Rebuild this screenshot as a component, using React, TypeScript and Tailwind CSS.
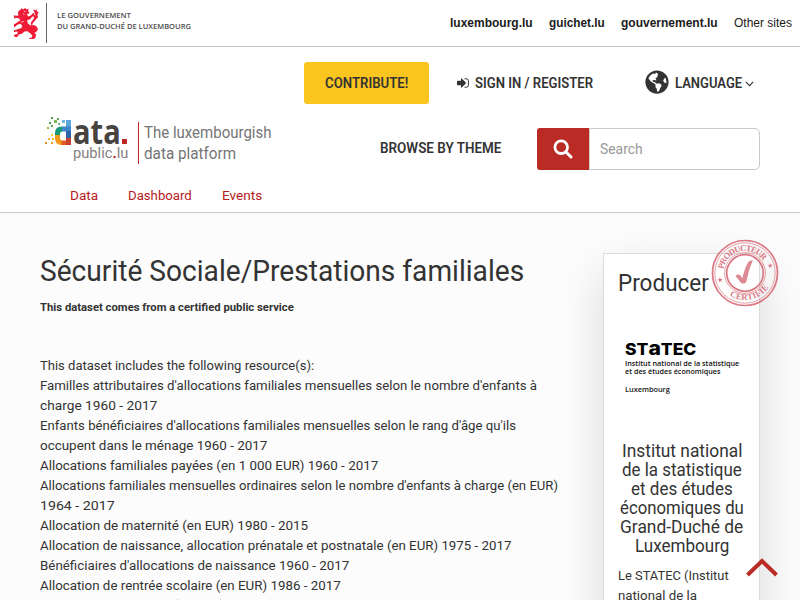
import { useLayoutEffect, useRef, useState } from "react";
import type { ReactNode } from "react";
import { FaGlobeAmericas } from "react-icons/fa";

/** One line of text, condensed or widened to occupy exactly `w` pixels. */
function Fit({ w, className = "", children }: { w: number; className?: string; children: ReactNode }) {
  const ref = useRef<HTMLSpanElement>(null);
  const [scale, setScale] = useState(1);
  useLayoutEffect(() => {
    if (ref.current) setScale(w / ref.current.offsetWidth);
  }, [w]);
  return (
    <span className={`block shrink-0 whitespace-nowrap ${className}`} style={{ width: w }}>
      <span ref={ref} className="inline-block origin-left" style={{ transform: `scaleX(${scale})` }}>
        {children}
      </span>
    </span>
  );
}

const resources: [string, number][] = [
  ["This dataset includes the following resource(s):", 274],
  ["Familles attributaires d'allocations familiales mensuelles selon le nombre d'enfants à", 497],
  ["charge 1960 - 2017", 117],
  ["Enfants bénéficiaires d'allocations familiales mensuelles selon le rang d'âge qu'ils", 476],
  ["occupent dans le ménage 1960 - 2017", 227],
  ["Allocations familiales payées (en 1 000 EUR) 1960 - 2017", 338],
  ["Allocations familiales mensuelles ordinaires selon le nombre d'enfants à charge (en EUR)", 518],
  ["1964 - 2017", 75],
  ["Allocation de maternité (en EUR) 1980 - 2015", 268],
  ["Allocation de naissance, allocation prénatale et postnatale (en EUR) 1975 - 2017", 471],
  ["Bénéficiaires d'allocations de naissance 1960 - 2017", 309],
  ["Allocation de rentrée scolaire (en EUR) 1986 - 2017", 301],
  ["Allocation d'éducation (en EUR)", 184],
];

const institute: [string, number][] = [
  ["Institut national", 120],
  ["de la statistique", 120],
  ["et des études", 102],
  ["économiques du", 124],
  ["Grand-Duché de", 123],
  ["Luxembourg", 94],
];

const dots: [number, number, number, string][] = [
  [6, 0, 2, "#3f9c46"], [12, 1, 2, "#62a94e"], [4, 5, 2, "#3f9c46"], [9, 3, 3, "#7db65a"],
  [13, 6, 2, "#61b38b"], [17, 3, 3, "#6eb4dc"], [2, 10, 2, "#8dbb3b"], [6, 8, 2, "#54a547"],
  [6, 17, 2, "#f4cf3b"], [3, 21, 2, "#f3b33b"], [7, 21, 2, "#f7b52c"],
  [0, 25, 2, "#e98a20"], [6, 25, 2, "#f39a1f"],
];

function Lion() {
  return (
    <svg viewBox="0 0 76 96" className="h-8 w-[25px]" fill="#ed1b35">
      <path d="M24 3l5 4 5-5 4 5 6-3-1 8 4 4-3 4-5 1 4 7 8-3 8-8 4 3-4 4 6 1-3 4-6-1-8 9-8 2 2 10 9 7 9-2 8 4 5 9-6 9-5 1 5 7-2 9-7 6-11-1-1-4 8-2 2-5-6-7-9-7-9 1-8 7-8 1-7 9-8-2-4-4 7-2 6-1 1-8-11 1-5-6 8 1 10-4 10-3 2-8-7-5-9 4-7 7-7-1-3-4 6-1-6-4 5-2 6 2 9-7 7-3-3-7-9-2-7 2-5-5 6-1-3-5 7 3 9-1-2-6 1-6z" />
      <path d="M60 63c-8-9-3-15 3-21s7-12 1-17c-5-5-9-5-11 0 5-2 9 2 8 7-1 7-13 12-10 23 2 6 6 8 9 8z" />
      <path d="M64 18l-5-8 2-4 3 5 4-5 2 7 5 2-4 7 2 8-4 6-4-6z" />
      <path d="M30 13h5M27 20l5 2M30 43l-9 3M45 50l8 3M34 75l-5 5" stroke="white" strokeWidth="2" />
    </svg>
  );
}

function DataLogo() {
  return (
    <div className="relative h-[46px] w-[84px]">
      <svg className="absolute left-0 top-0 h-[29px] w-[27px]" viewBox="0 0 27 29">
        {dots.map(([x, y, s, c]) => (
          <rect key={`${x}-${y}`} x={x} y={y} width={s} height={s} fill={c} />
        ))}
        <path d="M21 3h5v7h-5z" fill="#5aa6d8" />
        <path d="M17 9.500h9v5h-9z" fill="#3b86c8" />
        <path d="M21 14h5v7h-5z" fill="#2a62ab" />
        <path d="M10 18v-2q0-6.500 6.500-6.500H17v5q-2 0-2 2.500v1z" fill="#169879" />
        <path d="M10 18h5v2q0 3.500 2 3.500V28q-7 .500-7-7z" fill="#f29a1d" />
        <path d="M16.500 23.500H21V28h-4.500z" fill="#e65c27" />
        <path d="M21 21h5v7h-5z" fill="#c9402c" />
      </svg>
      <div className="absolute left-[28px] top-[-5px] flex font-[Open_Sans] text-[34.5px] font-bold leading-[38px] text-[#474340]">
        <Fit w={48}>ata</Fit>
      </div>
      <span className="absolute left-[77px] top-[22px] h-[5px] w-[5px] bg-[#bd2824]" />
      <Fit w={55} className="absolute left-[28px] top-[26px] text-[15.5px] leading-[20px] text-[#85817e]">
        public<b className="text-[#bd2824]">.</b>lu
      </Fit>
    </div>
  );
}

function Stamp() {
  return (
    <svg viewBox="0 0 68 68" className="absolute left-[107px] top-[-15px] h-[68px] w-[68px]" fill="none" stroke="#d97782">
      <circle cx="34" cy="34" r="32.5" strokeWidth="1.7" />
      <circle cx="34" cy="34" r="30.2" strokeWidth=".7" />
      <circle cx="34" cy="34" r="20.4" strokeWidth=".7" />
      <circle cx="34" cy="34" r="18.3" strokeWidth="1.7" />
      <defs>
        <path id="arcTop" d="M12.360 30.180A22 22 0 0 1 54.670 26.480" />
        <path id="arcBottom" d="M16.130 54.550A28 28 0 0 0 60.970 40.300" />
      </defs>
      <g fill="#d97782" stroke="none" className="font-[Liberation_Serif] text-[8.6px] font-bold">
        <text>
          <textPath href="#arcTop" textLength="52">PRODUCTEUR</textPath>
        </text>
        <text>
          <textPath href="#arcBottom" startOffset="3" textLength="44">CERTIFIÉ</textPath>
        </text>
        <path d="M59 24l.6 1.800 2-.2-1.400 1.300.9 1.800-1.700-1-1.400 1.500.3-2-1.800-.9 2-.4zM8.800 38.300l.8 1.800 2-.2-1.400 1.400.8 1.900-1.800-1.100-1.500 1.500.3-2-1.800-1 2-.4z" />
        <path fill="#dc8a94" d="M24.500 37q2.500-2.500 4.800-.8l2 3q2.500-10.200 5.700-15.700 1.300-2.300 4.800-2.200-4 9-6.300 20.700-.6 2.500-3.800 2.600-1.500 0-2.200-1.400z" />
      </g>
    </svg>
  );
}

export default function App() {
  return (
    <div className="h-[600px] w-[800px] overflow-hidden bg-[#fcfcfc] font-[Roboto,sans-serif] text-[#333]">
      <div className="flex h-[47px] items-start justify-between border-b border-[#c6c6c6] bg-white">
        <div className="flex items-start">
          <div className="ml-[14px] mt-[7px]"><Lion /></div>
          <div className="ml-[7px] mt-[3px] h-10 w-px bg-[#666]" />
          <div className="ml-[10px] mt-[10px] font-[Open_Sans] text-[7.6px] font-semibold leading-[11px] text-[#4c4c4e]">
            <Fit w={74}>LE GOUVERNEMENT</Fit>
            <Fit w={134}>DU GRAND-DUCHÉ DE LUXEMBOURG</Fit>
          </div>
        </div>
        <div className="mr-2 mt-[15px] flex gap-4 font-[Liberation_Sans] text-[12px] leading-4 text-[#1b1b1b]">
          <Fit w={83} className="font-bold">luxembourg.lu</Fit>
          <Fit w={56} className="font-bold">guichet.lu</Fit>
          <Fit w={97} className="font-bold">gouvernement.lu</Fit>
          <Fit w={58}>Other sites</Fit>
        </div>
      </div>

      <header className="h-[166px] border-b border-[#c8c8c8] bg-white pt-[15px]">
        <div className="flex h-[42px] items-center pl-[304px] text-[14px] font-semibold">
          <button className="flex h-[42px] w-[125px] items-center justify-center rounded-[3px] bg-[#fbc51f]">
            <Fit w={83}>CONTRIBUTE!</Fit>
          </button>
          <svg viewBox="0 0 12 10" className="ml-7 h-[10px] w-3" fill="#333">
            <path d="M0 3.400q0-.6.6-.6H4V.7q.1-.7.7-.2l4.100 4.100q.3.4 0 .8L4.700 9.500q-.6.5-.7-.2V7.200H.6Q0 7.200 0 6.600z" />
            <path d="M7.500.8h2q1.900 0 1.900 1.900v4.600q0 1.900-1.900 1.900h-2" fill="none" stroke="#333" />
          </svg>
          <Fit w={118} className="ml-[6px]">SIGN IN / REGISTER</Fit>
          <FaGlobeAmericas className="ml-[52px] mt-[-3px] h-6 w-6" />
          <Fit w={67} className="ml-[6px]">LANGUAGE</Fit>
          <svg viewBox="0 0 9 6" className="ml-[3px] mt-[2px] h-[6px] w-[9px]" fill="none" stroke="#333" strokeWidth="1.1">
            <path d="M.8 .8l3.700 3.800L8.200 .8" />
          </svg>
        </div>

        <div className="flex items-start pl-[45px]">
          <div className="mt-[13px]"><DataLogo /></div>
          <div className="ml-[9px] mt-[18px] h-[42px] w-px bg-[#bd2824]" />
          <div className="ml-[5px] mt-[19px] text-[15.6px] leading-[21px] text-[#757575]">
            <Fit w={128}>The luxembourgish</Fit>
            <Fit w={92}>data platform</Fit>
          </div>
          <Fit w={121} className="ml-[108px] mt-[34px] text-[14px] font-semibold leading-5">BROWSE BY THEME</Fit>
          <div className="ml-9 mt-6 flex h-[42px] w-[223px]">
            <div className="flex w-[52px] items-center justify-center rounded-l-[3px] bg-[#b92b24]">
              <svg viewBox="0 0 20 20" className="h-5 w-5" fill="none" stroke="white">
                <circle cx="8.2" cy="8.2" r="6.3" strokeWidth="2.8" />
                <path d="M13 13l5 5" strokeWidth="3" strokeLinecap="round" />
              </svg>
            </div>
            <div className="flex flex-1 items-center rounded-r-[5px] border border-[#c9c9c9] pl-[10px] pt-px text-[15.5px] text-[#999]">
              <Fit w={43}>Search</Fit>
            </div>
          </div>
        </div>

        <nav className="mt-[15px] flex gap-[30px] pl-[70px] text-[13.6px] leading-5 text-[#b5201c]">
          <Fit w={28}>Data</Fit>
          <Fit w={64}>Dashboard</Fit>
          <Fit w={40}>Events</Fit>
        </nav>
      </header>

      <main className="flex items-start pl-10">
        <section className="w-[563px] pt-10">
          <h1 className="text-[29px] leading-9">
            <Fit w={484}>Sécurité Sociale/Prestations familiales</Fit>
          </h1>
          <Fit w={254} className="mt-2 text-[11.5px] font-bold leading-5">This dataset comes from a certified public service</Fit>
          <div className="mt-[38px] text-[13.6px] leading-5">
            {resources.map(([text, w]) => (
              <Fit key={text} w={w}>{text}</Fit>
            ))}
          </div>
        </section>

        <aside className="relative mt-10 h-[420px] w-[157px] border border-[#dcdcdc] bg-white px-[14px] shadow-[0_20px_45px_rgba(0,0,0,0.14)]">
          <h2 className="mt-[14px] text-[23.5px] leading-[30px]">
            <Fit w={91}>Producer</Fit>
          </h2>
          <Stamp />
          <div className="ml-[7px] mt-[40px] font-[Open_Sans] text-[7px] font-semibold leading-[8px] text-[#111]">
            <Fit w={71} className="h-5 font-[Inter] text-[16.5px] font-extrabold leading-5 text-black">
              ST<span className="text-[20px] leading-none">a</span>TEC
            </Fit>
            <Fit w={114} className="mt-[2px]">Institut national de la statistique</Fit>
            <Fit w={95}>et des études économiques</Fit>
            <Fit w={45} className="mt-[10px]">Luxembourg</Fit>
          </div>
          <h3 className="mt-[48px] flex flex-col items-center text-[18.5px] leading-[19px]">
            {institute.map(([text, w]) => (
              <Fit key={text} w={w}>{text}</Fit>
            ))}
          </h3>
          <div className="mt-[9px] text-[13.6px] leading-5">
            <Fit w={111}>Le STATEC (Institut</Fit>
            <Fit w={79}>national de la</Fit>
          </div>
          <svg viewBox="0 0 32 20" className="absolute left-[142px] top-[304px] h-5 w-8" fill="none" stroke="#b92b24" strokeWidth="4">
            <path d="M1.500 17L16 3l14.500 14" />
          </svg>
        </aside>
      </main>
    </div>
  );
}
